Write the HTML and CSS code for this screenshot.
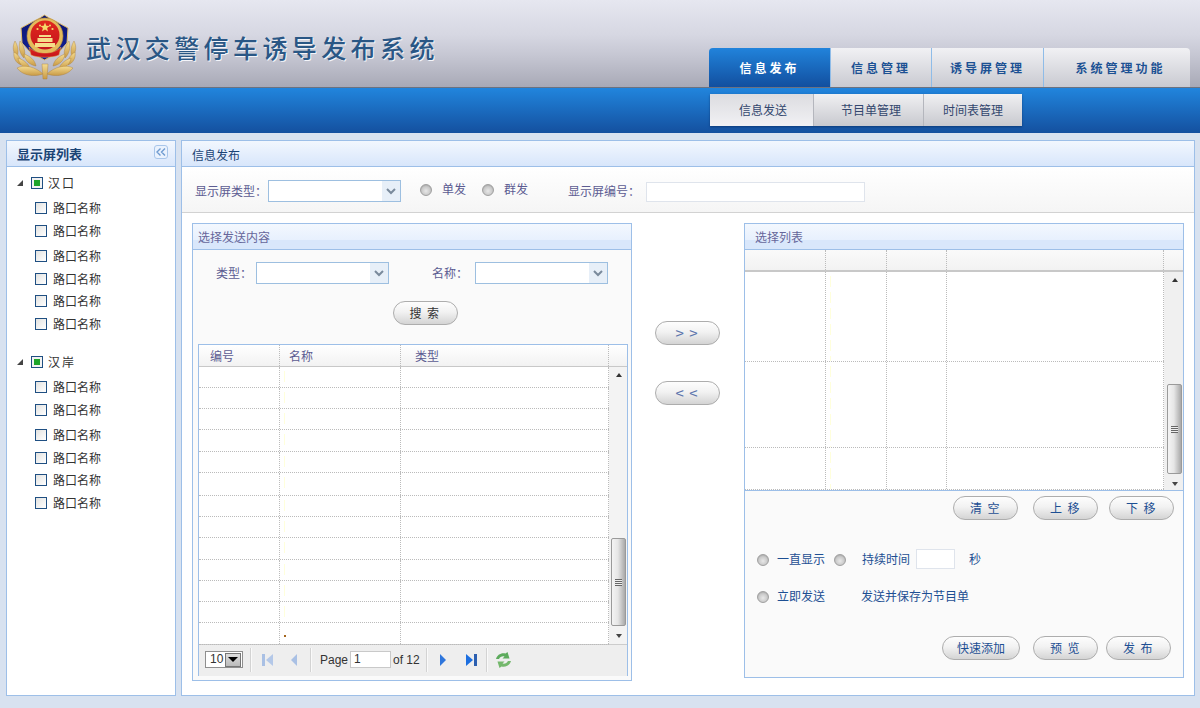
FILE: index.html
```html
<!DOCTYPE html>
<html lang="zh">
<head>
<meta charset="utf-8">
<title>武汉交警停车诱导发布系统</title>
<link rel="stylesheet" href="styles.css">
</head>
<body>
<header class="top">
  <div class="brand">
    <svg class="logo" width="66" height="66" viewBox="0 0 66 66">
      <defs>
        <linearGradient id="gold" x1="0" y1="0" x2="0" y2="1"><stop offset="0" stop-color="#f4dc92"/><stop offset="1" stop-color="#c99a45"/></linearGradient>
        <linearGradient id="navy" x1="0" y1="0" x2="0" y2="1"><stop offset="0" stop-color="#0c1670"/><stop offset="1" stop-color="#13209a"/></linearGradient>
        <linearGradient id="red" x1="0" y1="0" x2="0" y2="1"><stop offset="0" stop-color="#e0281e"/><stop offset="1" stop-color="#c4131c"/></linearGradient>
      </defs>
      <g fill="url(#gold)" stroke="#a87c35" stroke-width=".4">
        <path d="M3 27C0 33 1 39 5 43C7 38 6 32 3 27Z"/>
        <path d="M2 38C1 44 4 49 9 51C10 46 7 41 2 38Z"/>
        <path d="M6 44C7 51 12 54 18 55C17 50 12 46 6 44Z"/>
        <path d="M8 27C6 34 8 40 12 44C14 38 12 32 8 27Z"/>
        <path d="M12 40C13 47 18 51 24 52C23 46 18 42 12 40Z"/>
        <path d="M62 27C65 33 64 39 60 43C58 38 59 32 62 27Z"/>
        <path d="M63 38C64 44 61 49 56 51C55 46 58 41 63 38Z"/>
        <path d="M59 44C58 51 53 54 47 55C48 50 53 46 59 44Z"/>
        <path d="M57 27C59 34 57 40 53 44C51 38 53 32 57 27Z"/>
        <path d="M53 40C52 47 47 51 41 52C42 46 47 42 53 40Z"/>
        <path d="M5 54C12 50 24 53 31 60C22 63 11 62 5 54Z"/>
        <path d="M61 54C54 50 42 53 35 60C44 63 55 62 61 54Z"/>
        <path d="M30 50H36L35 65H31Z"/>
      </g>
      <path d="M32.500 1L38 4.500L45 8L56 14L55 29L47 38L32.500 46L18 38L10 29L9 14L20 8L27 4.500Z" fill="url(#navy)" stroke="#e0bd6b" stroke-width="1"/>
      <circle cx="33" cy="22" r="18" fill="#e4bb5c" stroke="#b98f3f" stroke-width=".6"/>
      <circle cx="33" cy="21" r="14.500" fill="url(#red)"/>
      <path d="M33 8.500l1.300 3.200 3.400.2-2.600 2.200.9 3.300-3-1.800-3 1.800.9-3.300-2.600-2.200 3.400-.2Z" fill="#f6da6a"/>
      <circle cx="25.500" cy="15" r="1.100" fill="#f6da6a"/><circle cx="28" cy="11.500" r="1" fill="#f6da6a"/>
      <circle cx="40.500" cy="15" r="1.100" fill="#f6da6a"/><circle cx="38" cy="11.500" r="1" fill="#f6da6a"/>
      <path d="M27 21h12v2H27ZM25.500 24h15v4h-15ZM23 29h20v4H23Z" fill="#f5dc8a"/>
      <path d="M17 33C22 38 28 39 33 39C38 39 44 38 49 33L47 41C41 44 25 44 19 41Z" fill="url(#red)" stroke="#e4bb5c" stroke-width=".5"/>
    </svg>
    <h1 class="site-title">武汉交警停车诱导发布系统</h1>
  </div>
  <nav class="tabs">
    <a class="tab tab-active w1">信息发布</a>
    <a class="tab w2">信息管理</a>
    <a class="tab w3">诱导屏管理</a>
    <a class="tab w4">系统管理功能</a>
  </nav>
</header>
<div class="band">
  <nav class="subtabs">
    <a class="subtab sub1 sub-active">信息发送</a>
    <a class="subtab sub2">节目单管理</a>
    <a class="subtab sub3">时间表管理</a>
  </nav>
</div>
<main class="layout">
  <aside class="side">
    <div class="side-title">
      <span>显示屏列表</span>
      <span class="collapse">
        <svg width="10" height="8" viewBox="0 0 10 8"><path d="M4.500 0.500L1 4L4.500 7.500M9 0.500L5.500 4L9 7.500" fill="none" stroke="#6f9bd0" stroke-width="1.400"/></svg>
      </span>
    </div>
    <div class="tree">
      <div class="group">
        <div class="node"><i class="tri"></i><i class="check-on"></i><span class="node-name">汉口</span></div>
        <div class="leaf l1"><i class="check"></i>路口名称</div>
        <div class="leaf l2"><i class="check"></i>路口名称</div>
        <div class="leaf l3"><i class="check"></i>路口名称</div>
        <div class="leaf l2"><i class="check"></i>路口名称</div>
        <div class="leaf l4"><i class="check"></i>路口名称</div>
        <div class="leaf l2"><i class="check"></i>路口名称</div>
      </div>
      <div class="group group2">
        <div class="node"><i class="tri"></i><i class="check-on"></i><span class="node-name">汉岸</span></div>
        <div class="leaf l1"><i class="check"></i>路口名称</div>
        <div class="leaf l2"><i class="check"></i>路口名称</div>
        <div class="leaf l3"><i class="check"></i>路口名称</div>
        <div class="leaf l2"><i class="check"></i>路口名称</div>
        <div class="leaf l4"><i class="check"></i>路口名称</div>
        <div class="leaf l2"><i class="check"></i>路口名称</div>
      </div>
    </div>
  </aside>
  <section class="content">
    <div class="content-title">信息发布</div>
    <div class="toolbar">
      <label class="lbl">显示屏类型：</label>
      <div class="select tb-select"><i class="sel-arrow"><svg width="10" height="7" viewBox="0 0 10 7"><path d="M1 1L5 5L9 1" fill="none" stroke="#7a8a9c" stroke-width="2"/></svg></i></div>
      <i class="radio r-a"></i><span class="lbl r-text">单发</span>
      <i class="radio r-b"></i><span class="lbl r-text">群发</span>
      <label class="lbl no-label">显示屏编号：</label>
      <div class="text-input"></div>
    </div>
    <div class="work">
      <div class="card card-left">
        <div class="card-title">选择发送内容</div>
        <div class="filter">
          <label class="lbl f1">类型：</label>
          <div class="select"><i class="sel-arrow"><svg width="10" height="7" viewBox="0 0 10 7"><path d="M1 1L5 5L9 1" fill="none" stroke="#7a8a9c" stroke-width="2"/></svg></i></div>
          <label class="lbl f2">名称：</label>
          <div class="select"><i class="sel-arrow"><svg width="10" height="7" viewBox="0 0 10 7"><path d="M1 1L5 5L9 1" fill="none" stroke="#7a8a9c" stroke-width="2"/></svg></i></div>
        </div>
        <div class="search-row"><button class="pill pill-dark">搜 索</button></div>
        <div class="grid-box">
          <div class="ghead">
            <span class="lc1">编号</span><span class="lc2">名称</span><span class="lc3">类型</span><span class="lc4"></span>
          </div>
          <div class="gbody gbody-left">
            <div class="rows">
              <div class="row"><i class="lc1"></i><i class="lc2 mark"></i><i class="lc3"></i></div>
              <div class="row"><i class="lc1"></i><i class="lc2 mark"></i><i class="lc3"></i></div>
              <div class="row"><i class="lc1"></i><i class="lc2 mark"></i><i class="lc3"></i></div>
              <div class="row h22"><i class="lc1"></i><i class="lc2 mark"></i><i class="lc3"></i></div>
              <div class="row"><i class="lc1"></i><i class="lc2 mark"></i><i class="lc3"></i></div>
              <div class="row h23"><i class="lc1"></i><i class="lc2 mark"></i><i class="lc3"></i></div>
              <div class="row"><i class="lc1"></i><i class="lc2 mark"></i><i class="lc3"></i></div>
              <div class="row"><i class="lc1"></i><i class="lc2 mark"></i><i class="lc3"></i></div>
              <div class="row h22"><i class="lc1"></i><i class="lc2 mark"></i><i class="lc3"></i></div>
              <div class="row"><i class="lc1"></i><i class="lc2 mark"></i><i class="lc3"></i></div>
              <div class="row"><i class="lc1"></i><i class="lc2 mark"></i><i class="lc3"></i></div>
              <div class="row"><i class="lc1"></i><i class="lc2 mark"></i><i class="lc3"></i></div>
              <div class="row h22"><i class="lc1"></i><i class="lc2 dot"></i><i class="lc3"></i></div>
            </div>
            <div class="sbar sbar-left">
              <i class="up"></i>
              <i class="thumb thumb-left"><b></b></i>
              <i class="down"></i>
            </div>
          </div>
          <div class="pager">
            <span class="psize"><span class="psize-num">10</span><i class="psize-btn"></i></span>
            <i class="sep"></i>
            <svg class="pi p-first" width="13" height="14" viewBox="0 0 13 14"><rect x="1" y="1" width="3" height="12" fill="#a9c0e4"/><path d="M12 1L5 7L12 13Z" fill="#b4c8e8"/></svg>
            <svg class="pi p-prev" width="8" height="14" viewBox="0 0 8 14"><path d="M7 1L1 7L7 13Z" fill="#a9c0e4"/></svg>
            <i class="sep sep2"></i>
            <span class="ptext">Page</span><span class="pinput">1</span><span class="ptext">of 12</span>
            <i class="sep sep3"></i>
            <svg class="pi p-next" width="8" height="14" viewBox="0 0 8 14"><path d="M1 1L7 7L1 13Z" fill="#2f76dc"/></svg>
            <svg class="pi p-last" width="13" height="14" viewBox="0 0 13 14"><path d="M1 1L8 7L1 13Z" fill="#1c6fe0"/><rect x="9" y="1" width="3" height="12" fill="#2c5fb0"/></svg>
            <i class="sep sep4"></i>
            <svg class="pi p-ref" width="17" height="16" viewBox="0 0 17 16"><path d="M1 7C2 3 6 0.500 10.500 1.500L12.500 0L14.500 6.500L7.500 6.500L9.500 4.500C7 4 5 5 4 7Z" fill="#5dab5d"/><path d="M16 9C15 13 11 15.500 6.500 14.500L4.500 16L2.500 9.500L9.500 9.500L7.500 11.500C10 12 12 11 13 9Z" fill="#74b86c"/></svg>
          </div>
        </div>
      </div>
      <div class="mid">
        <button class="pill pill-arrow">&gt; &gt;</button>
        <button class="pill pill-arrow">&lt; &lt;</button>
      </div>
      <div class="card card-right">
        <div class="card-title">选择列表</div>
        <div class="rgrid">
          <div class="ghead rhead">
            <span class="rc1"></span><span class="rc2"></span><span class="rc3"></span><span class="rc4"></span><span class="rc5"></span>
          </div>
          <div class="gbody gbody-right">
            <div class="rows">
              <div class="rrow rr1"><i class="rc1"></i><i class="rc2 mark-r"></i><i class="rc3"></i><i class="rc4"></i></div>
              <div class="rrow rr2"><i class="rc1"></i><i class="rc2 mark-r"></i><i class="rc3"></i><i class="rc4"></i></div>
              <div class="rrow rr3"><i class="rc1"></i><i class="rc2 mark-r"></i><i class="rc3"></i><i class="rc4"></i></div>
            </div>
            <div class="sbar sbar-right">
              <i class="up"></i>
              <i class="thumb thumb-right"><b></b></i>
              <i class="down"></i>
            </div>
          </div>
        </div>
        <div class="actions a-top">
          <button class="pill">清 空</button>
          <button class="pill m15">上 移</button>
          <button class="pill m11">下 移</button>
        </div>
        <div class="opts">
          <i class="radio opt-radio"></i><span class="opt o1">一直显示</span>
          <i class="radio opt-radio r-two"></i><span class="opt o2">持续时间</span>
          <span class="sec-input"></span><span class="opt o3">秒</span>
        </div>
        <div class="opts opts2">
          <i class="radio opt-radio"></i><span class="opt o1">立即发送</span>
          <span class="opt o4">发送并保存为节目单</span>
        </div>
        <div class="actions a-bottom">
          <button class="pill pill-wide">快速添加</button>
          <button class="pill m13">预 览</button>
          <button class="pill m8">发 布</button>
        </div>
      </div>
    </div>
  </section>
</main>
</body>
</html>
```
FILE: styles.css
```css
* { box-sizing: border-box; }
html, body { margin: 0; padding: 0; }
body {
  width: 1200px; height: 708px; overflow: hidden;
  background: #d8e2f0;
  font: 12px/16px "Noto Sans CJK SC", "Liberation Sans", sans-serif;
  color: #333;
}
i { display: block; font-style: normal; }
a { display: block; }

/* Header */
.top {
  height: 88px; display: flex; justify-content: space-between; align-items: flex-end;
  background: linear-gradient(#e6e7f0 0, #d6d7e2 35px, #c6c7d3 55px, #a8a9b6 87px);
  border-bottom: 1px solid #6c7280;
  padding-right: 10px;
}
.brand { display: flex; align-items: flex-start; height: 87px; padding: 14px 0 0 12px; }
.logo { display: block; }
.site-title {
  margin: 16px 0 0 8px; font-size: 25px; line-height: 34px; font-weight: 500;
  letter-spacing: 4.400px; color: #2a5785;
  text-shadow: 1px 1px 0 #f4f5fa;
}
.tabs { display: flex; height: 39px; }
.tab {
  height: 39px; line-height: 40px; text-align: center; font-weight: 700; letter-spacing: 3px;
  color: #1c5193; background: linear-gradient(#f1f1f4, #c9cad1);
  border-left: 1px solid #8fbce8;
}
.tab-active { color: #fff; background: linear-gradient(#2183db, #124f9f); border-left: 0; border-radius: 4px 0 0 0; }
.w1 { width: 121px; } .w2 { width: 101px; } .w3 { width: 112px; }
.w4 { width: 147px; border-radius: 0 4px 0 0; padding-left: 7px; }

.band {
  height: 45px; padding: 6px 0 0 710px;
  background: linear-gradient(#2185dd, #14509f);
}
.subtabs { display: flex; height: 32px; box-shadow: 0 1px 2px rgba(0,30,80,.5); width: 312px; }
.subtab {
  line-height: 32px; text-align: center; color: #33476e;
  background: linear-gradient(#f0f0f2, #c8c9cf);
  border-left: 1px solid #b4b6bd;
}
.sub-active { background: linear-gradient(#dcdce0, #f1f1f4); border-left: 0; }
.sub1 { width: 103px; padding-left: 3px; } .sub2 { width: 110px; padding-left: 5px; } .sub3 { width: 99px; }

/* Layout */
.layout { display: flex; height: 563px; padding: 7px 5px 0 6px; gap: 5px; background: #d8e2f0; }
.side { width: 170px; height: 556px; background: #fff; border: 1px solid #9dbfe8; }
.side-title {
  height: 26px; padding: 0 7px 0 10px; display: flex; justify-content: space-between; align-items: center;
  font-size: 13px; font-weight: 700; color: #1a4475;
  background: linear-gradient(#f2f7fe, #d8e6fb); border-bottom: 1px solid #9dbfe8;
}
.collapse {
  width: 14px; height: 14px; border: 1px solid #a9c6ea; border-radius: 3px; background: #eaf2fd;
  display: flex; align-items: center; justify-content: center; margin-top: -3px;
}
.tree { padding-top: 8px; }
.group2 { margin-top: 22px; }
.node { height: 16px; display: flex; align-items: center; padding-left: 10px; letter-spacing: 2px; color: #333; }
.tri { width: 0; height: 0; border-left: 6px solid transparent; border-bottom: 6px solid #444; margin-right: 8px; }
.check-on {
  width: 12px; height: 12px; border: 1px solid #1f4f82; margin-right: 5px;
  background: linear-gradient(#1ea52a, #1ea52a) center / 6px 6px no-repeat #f2f2f2;
}
.leaf { display: flex; align-items: center; height: 16px; padding-left: 28px; color: #333; }
.check {
  width: 12px; height: 12px; border: 1px solid #1f4f82; margin-right: 6px;
  background: linear-gradient(135deg, #e2e2e0, #fff);
}
.l1 { margin-top: 9px; } .l2 { margin-top: 7px; } .l3 { margin-top: 9px; } .l4 { margin-top: 6px; }

/* Main */
.content { width: 1014px; height: 556px; background: #fff; border: 1px solid #9dbfe8; }
.content-title {
  height: 26px; line-height: 27px; padding-left: 10px; color: #1a4475;
  background: linear-gradient(#f2f7fe, #d8e6fb); border-bottom: 1px solid #9dbfe8;
}
.toolbar {
  height: 46px; display: flex; align-items: center; padding-left: 13px;
  background: linear-gradient(#fff, #f5f5f5); border-bottom: 1px solid #d2d2d2;
}
.lbl { color: #5c5c92; white-space: nowrap; }
.toolbar > .lbl:first-child { width: 73px; margin-top: 3px; }
.select {
  width: 133px; height: 22px; border: 1px solid #9dbfe0; background: #fff; display: flex; justify-content: flex-end;
}
.tb-select { margin-top: 3px; }
.sel-arrow { width: 18px; height: 20px; background: #e7eff8; display: flex; align-items: center; justify-content: center; }
.radio {
  width: 12px; height: 12px; border-radius: 50%; flex: none; border: 1px solid #a0a0a0;
  background: radial-gradient(circle at 50% 60%, #e8e8e8 0, #c9c9c9 55%, #8f8f8f 100%);
}
.r-a { margin-left: 19px; margin-top: 1px; }
.r-text { margin-left: 10px; margin-top: -1px; width: 24px; }
.r-b { margin-left: 16px; margin-top: 1px; }
.no-label { margin-left: 40px; width: 78px; margin-top: 3px; }
.text-input { width: 219px; height: 20px; margin-top: 5px; border: 1px solid #dfe4ec; background: #fff; }

.work { display: flex; padding: 10px 0 0 10px; }
.card { width: 440px; border: 1px solid #9dbfe8; background: #fafafa; }
.card-left { height: 458px; }
.card-right { height: 455px; }
.card-title {
  height: 26px; line-height: 25px; padding-left: 5px; color: #66669a;
  background: linear-gradient(#f3f8fe 0, #e7f0fd 65%, #d9e7fb 66%, #d9e7fb 100%);
  border-bottom: 1px solid #9dbfe8;
}
.card-right .card-title { padding-left: 10px; }
.filter { display: flex; align-items: center; height: 22px; margin-top: 12px; padding-left: 23px; }
.f1 { width: 40px; }
.f2 { margin-left: 43px; width: 43px; }
.search-row { display: flex; justify-content: center; margin-top: 17px; padding-left: 26px; }
.pill {
  display: block; width: 65px; height: 24px; padding: 0; border: 1px solid #adadad; border-radius: 12px;
  background: linear-gradient(#fdfdfd 0, #f2f2f2 45%, #d4d4d4 100%);
  font: 12px/20px "Noto Sans CJK SC", sans-serif; color: #1d4f93; letter-spacing: 1.500px;
}
.pill-dark { color: #333; }
.pill-wide { width: 78px; letter-spacing: 0; }
.pill-arrow { color: #5d75ad; letter-spacing: 1px; font-size: 15px; }
.m15 { margin-left: 15px; } .m11 { margin-left: 11px; } .m13 { margin-left: 13px; } .m8 { margin-left: 8px; }

.grid-box { width: 430px; height: 332px; margin: 19px 0 0 5px; border: 1px solid #9dbfe8; background: #fff; }
.ghead {
  height: 22px; display: flex; border-bottom: 1px solid #c8c8c8; color: #5c5c92; line-height: 21px;
  background: linear-gradient(#fff, #f2f2f2);
}
.ghead span { display: block; border-right: 1px dotted #bbb; }
.lc1 { width: 81px; flex: none; padding-left: 11px; }
.lc2 { width: 121px; flex: none; padding-left: 9px; }
.lc3 { width: 208px; flex: none; padding-left: 14px; }
.ghead .lc4 { border-right: 0; flex: 1; }
.gbody { display: flex; background: #fff; }
.gbody-left { height: 277px; }
.rows { flex: 1; min-width: 0; }
.row { height: 21px; display: flex; border-bottom: 1px dotted #bbb; }
.h22 { height: 22px; } .h23 { height: 23px; }
.row i { border-right: 1px dotted #bbb; height: 100%; }
.mark { background: linear-gradient(#ffffdc, #ffffdc) 4px 4px / 1px 11px no-repeat; }
.dot { background: linear-gradient(#a4651c, #a4651c) 4px 12px / 2px 2px no-repeat; }
.sbar { flex: none; display: flex; flex-direction: column; align-items: center; background: #f3f3f3; }
.sbar-left { width: 18px; padding: 6px 1px 6px 2px; }
.up { width: 0; height: 0; border-left: 3px solid transparent; border-right: 3px solid transparent; border-bottom: 4px solid #333; }
.down { width: 0; height: 0; border-left: 3px solid transparent; border-right: 3px solid transparent; border-top: 4px solid #444; margin-top: auto; }
.thumb {
  width: 15px; border: 1px solid #9a9a9a; border-radius: 2px; display: flex; align-items: center; justify-content: center;
  background: linear-gradient(90deg, #f4f4f4, #e6e6e6 45%, #a9a9a9);
}
.thumb b { display: block; width: 7px; height: 7px; background: repeating-linear-gradient(#666 0 1px, #eee 1px 2px); }
.thumb-left { height: 88px; margin-top: 161px; }
.pager {
  height: 32px; display: flex; align-items: center; padding: 0 0 2px 6px; background: #eeeeee; border-top: 1px solid #ccc;
  font-family: "Liberation Sans", sans-serif; color: #333;
}
.psize { width: 38px; height: 17px; border: 1px solid #8f8f8f; background: #fff; display: flex; justify-content: space-between; align-items: center; }
.psize-num { padding-left: 4px; line-height: 15px; }
.psize-btn { width: 16px; height: 14px; margin-right: 1px; border: 1px solid #777; background: linear-gradient(#ddd, #bbb); }
.psize-btn::after { content: ""; display: block; width: 0; height: 0; margin: 3px auto 0; border-left: 5px solid transparent; border-right: 5px solid transparent; border-top: 5px solid #000; }
.sep { height: 24px; background: #d3d3d3; border-right: 1px solid #fafafa; margin-left: 7px; width: 2px; }
.pi { display: block; flex: none; }
.p-first { margin-left: 9px; }
.p-prev { margin-left: 16px; }
.sep2 { margin-left: 12px; }
.ptext { margin-left: 8px; }
.pinput { width: 41px; height: 17px; border: 1px solid #c9c9c9; background: #fff; margin-left: 2px; line-height: 15px; padding-left: 3px; }
.pinput + .ptext { margin-left: 2px; }
.sep3 { margin-left: 6px; }
.p-next { margin-left: 11px; }
.p-last { margin-left: 18px; }
.sep4 { margin-left: 8px; }
.p-ref { margin-left: 7px; }

.mid { width: 112px; display: flex; flex-direction: column; align-items: center; gap: 36px; padding: 98px 2px 0 0; }

.rgrid { border-bottom: 1px solid #9dbfe8; height: 241px; }
.rhead { height: 22px; border-bottom: 2px solid #c8c8c8; background: linear-gradient(#fafafa, #f2f2f2); }
.rc1 { width: 81px; flex: none; }
.rc2 { width: 61px; flex: none; }
.rc3 { width: 60px; flex: none; }
.rc4 { width: 217px; flex: none; }
.ghead .rc5 { border-right: 0; flex: 1; }
.gbody-right { height: 218px; }
.rrow { display: flex; border-bottom: 1px dotted #bbb; }
.rrow i { border-right: 1px dotted #bbb; height: 100%; }
.rr1 { height: 90px; } .rr2 { height: 86px; } .rr3 { height: 42px; }
.mark-r { background: repeating-linear-gradient(#ffffdc 0 11px, transparent 11px 16px) 4px 4px / 1px 100% no-repeat; }
.sbar-right { width: 19px; background: #f0f0f0; padding: 6px 1px 4px 3px; }
.thumb-right { height: 90px; margin-top: 102px; }

.actions { display: flex; justify-content: flex-end; }
.a-top { margin-top: 5px; padding-right: 9px; }
.a-bottom { margin-top: 32px; padding-right: 12px; }
.opts { display: flex; align-items: center; height: 16px; margin-top: 31px; padding-left: 12px; color: #1d4f93; }
.opts2 { margin-top: 21px; }
.opt { white-space: nowrap; }
.opt-radio { margin-top: 2px; }
.o1 { margin-left: 8px; }
.r-two { margin-left: 9px; }
.o2 { margin-left: 16px; }
.sec-input { width: 39px; height: 20px; margin-left: 6px; border: 1px solid #dfe4ec; background: #fff; }
.o3 { margin-left: 14px; }
.o4 { margin-left: 36px; }
```
